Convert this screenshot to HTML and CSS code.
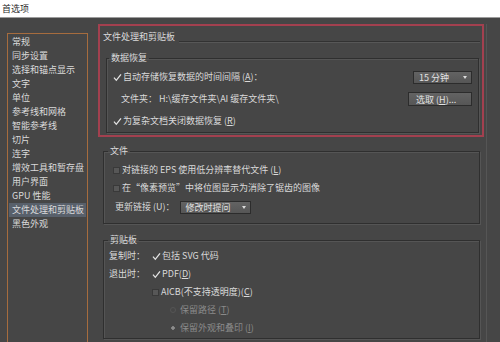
FILE: index.html
```html
<!DOCTYPE html>
<html lang="zh-CN">
<head>
    <meta charset="UTF-8">
    <title>首选项</title>
    <link rel="stylesheet" href="styles.css">
</head>
<body>
    <div class="titlebar">首选项</div>
    <div class="main">
        <ul class="nav">
            <li>常规</li>
            <li>同步设置</li>
            <li>选择和锚点显示</li>
            <li>文字</li>
            <li>单位</li>
            <li>参考线和网格</li>
            <li>智能参考线</li>
            <li>切片</li>
            <li>连字</li>
            <li>增效工具和暂存盘</li>
            <li>用户界面</li>
            <li>GPU 性能</li>
            <li class="active">文件处理和剪贴板</li>
            <li>黑色外观</li>
        </ul>

        <div class="content">
            <div class="highlight">
                <div class="section-title"><span>文件处理和剪贴板</span><i class="rule"></i></div>

                <fieldset class="group recovery">
                    <legend>数据恢复</legend>
                    <div class="rows">
                        <div class="row">
                            <svg class="tick" viewBox="0 0 9 9" width="9" height="9"><path d="M1 4.6 3.3 7.3 8 1.4" fill="none" stroke="#e4e4e4" stroke-width="1.3"/></svg>
                            <span>自动存储恢复数据的时间间隔 (<u>A</u>)：</span>
                            <span class="select interval">15 分钟<i class="caret"></i></span>
                        </div>
                        <div class="row">
                            <span class="folder">文件夹： H:\缓存文件夹\AI 缓存文件夹\</span>
                            <span class="button">选取 (<u>H</u>)...</span>
                        </div>
                        <div class="row">
                            <svg class="tick" viewBox="0 0 9 9" width="9" height="9"><path d="M1 4.6 3.3 7.3 8 1.4" fill="none" stroke="#e4e4e4" stroke-width="1.3"/></svg>
                            <span>为复杂文档关闭数据恢复 (<u>R</u>)</span>
                        </div>
                    </div>
                </fieldset>
            </div>

            <fieldset class="group files">
                <legend>文件</legend>
                <div class="rows">
                    <div class="row">
                        <i class="box"></i>
                        <span>对链接的 EPS 使用低分辨率替代文件 (<u>L</u>)</span>
                    </div>
                    <div class="row">
                        <i class="box"></i>
                        <span>在“像素预览”中将位图显示为消除了锯齿的图像</span>
                    </div>
                    <div class="row tall">
                        <span class="update">更新链接 (U)：</span>
                        <span class="select links">修改时提问<i class="caret"></i></span>
                    </div>
                </div>
            </fieldset>

            <fieldset class="group clipboard">
                <legend>剪贴板</legend>
                <div class="rows">
                    <div class="row">
                        <span class="label">复制时：</span>
                        <svg class="tick" viewBox="0 0 9 9" width="9" height="9"><path d="M1 4.6 3.3 7.3 8 1.4" fill="none" stroke="#e4e4e4" stroke-width="1.3"/></svg>
                        <span>包括 SVG 代码</span>
                    </div>
                    <div class="row">
                        <span class="label">退出时：</span>
                        <svg class="tick" viewBox="0 0 9 9" width="9" height="9"><path d="M1 4.6 3.3 7.3 8 1.4" fill="none" stroke="#e4e4e4" stroke-width="1.3"/></svg>
                        <span>PDF(<u>D</u>)</span>
                    </div>
                    <div class="row indent">
                        <i class="box"></i>
                        <span>AICB(不支持透明度)(<u>C</u>)</span>
                    </div>
                    <div class="row radio-row disabled">
                        <i class="radio"></i>
                        <span>保留路径 (<u>T</u>)</span>
                    </div>
                    <div class="row radio-row disabled">
                        <i class="radio on"></i>
                        <span>保留外观和叠印 (<u>I</u>)</span>
                    </div>
                </div>
            </fieldset>
        </div>
    </div>
</body>
</html>
```

FILE: styles.css
```css
* { box-sizing: border-box; }
body { margin: 0; height: 342px; overflow: hidden; background: #464646; color: #dadada; font-family: "Noto Sans CJK SC", "Noto Sans", sans-serif; font-size: 9px; line-height: 14px; }
u { text-underline-offset: 1px; }

.titlebar { height: 18px; padding-left: 2px; line-height: 17px; background: #fff; color: #2a2a2a; border-bottom: 1px solid #9c9c9c; }

.main { display: flex; height: 324px; padding: 6px 0 0 7px; }
.nav { list-style: none; width: 81px; height: 309px; margin: 9px 0 0; padding: 1px; border: 1px solid #a66c3e; border-bottom: none; }
.nav li { height: 14px; padding-left: 3px; white-space: nowrap; }
.nav li.active { background: #58606b; }

.content { width: 389px; height: 318px; margin-left: 10px; border-right: 1px solid #555; }

.highlight { margin-right: 2px; padding: 4px 0 0 3px; border: 2px solid #a3404f; }
.section-title { display: flex; align-items: flex-end; height: 14px; white-space: nowrap; }
.rule { flex: 1; margin: 0 2px 1px 4px; border-top: 1px solid #323232; border-bottom: 1px solid #575757; }

.group { min-width: 0; padding: 0; border: 1px solid #2f2f2f; box-shadow: inset 1px 1px 0 #555, 1px 1px 0 #555; }
.group legend { margin-left: 4px; padding: 0 2px; line-height: 14px; }
.rows { display: flex; flex-direction: column; }
.row { display: flex; align-items: center; height: 14px; white-space: nowrap; }

.recovery { margin: 7px 3px 2px 3px; }
.recovery legend { margin-left: 2px; }
.recovery .rows { gap: 6px; padding: 4px 6px 3px; }
.recovery .row { height: 16px; }
.folder { padding-left: 8px; }

.tick { flex: none; margin-right: 1px; }
.box { flex: none; width: 7px; height: 7px; margin-right: 2px; background: #575757; border: 1px solid #393939; }
.radio { flex: none; width: 6px; height: 6px; margin-right: 4px; border-radius: 50%; border: 1px solid #555; }
.radio.on { border: none; background: radial-gradient(circle, #8c8c8c 0, #8c8c8c 1.5px, transparent 2px); }

.select, .button { display: flex; align-items: center; margin-left: auto; color: #e2e2e2; background: linear-gradient(#636363, #565656); border: 1px solid #2c2c2c; line-height: 11px; }
.select { justify-content: space-between; height: 13px; padding: 0 4px 0 5px; }
.select.interval { width: 59px; }
.select.links { width: 71px; margin-left: 5px; }
.button { width: 64px; height: 14px; padding-left: 7px; }
.caret { width: 0; height: 0; border-left: 2.5px solid transparent; border-right: 2.5px solid transparent; border-top: 3px solid #ddd; }

.files { margin: 7px 6px 0 5px; }
.files .rows { gap: 4px; padding: 5px 0 8px 9px; }
.files .row.tall { height: 16px; }
.update { padding-left: 2px; }

.clipboard { margin: 9px 6px 0 5px; }
.clipboard .rows { gap: 4px; padding: 2px 0 3px 5px; }
.label { width: 43px; }
.indent { padding-left: 43px; }
.radio-row { padding-left: 61px; }
.disabled { color: #8a8a8a; }
```
